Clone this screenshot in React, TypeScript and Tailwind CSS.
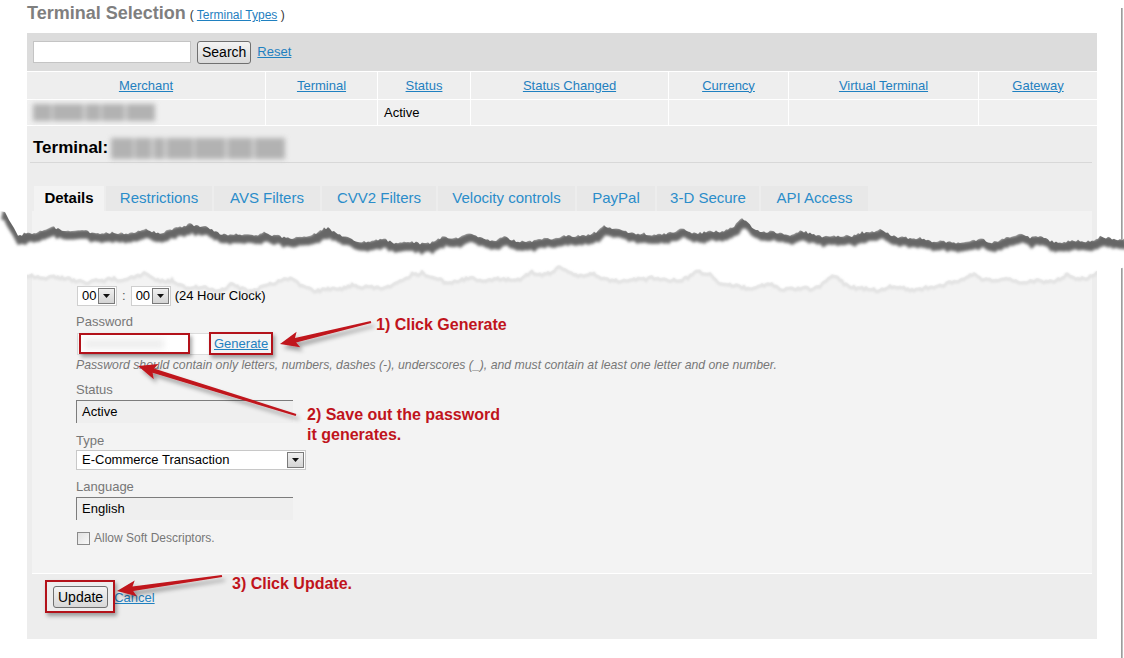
import React from "react";

const RED = "#c0141c";

const columns = ["Merchant", "Terminal", "Status", "Status Changed", "Currency", "Virtual Terminal", "Gateway"];

const tabs = [
  { label: "Details", w: "w-[70px]", active: true },
  { label: "Restrictions", w: "w-[106px]" },
  { label: "AVS Filters", w: "w-[106px]" },
  { label: "CVV2 Filters", w: "w-[114px]" },
  { label: "Velocity controls", w: "w-[137px]" },
  { label: "PayPal", w: "w-[78px]" },
  { label: "3-D Secure", w: "w-[102px]" },
  { label: "API Access", w: "w-[107px]" },
];

function Caret() {
  return (
    <svg width="7" height="4" viewBox="0 0 7 4">
      <path d="M0 0h7L3.5 4z" fill="#111" />
    </svg>
  );
}

function DropButton() {
  return (
    <span className="flex h-[16px] w-[17px] items-center justify-center border border-[#7a7a7a] bg-gradient-to-b from-[#f0f0f0] to-[#d4d4d4]">
      <Caret />
    </span>
  );
}

function TimeSelect() {
  return (
    <div className="flex h-[20px] w-[40px] items-center justify-between border border-[#cfcfcf] bg-white pl-[4px] pr-px">
      <span>00</span>
      <DropButton />
    </div>
  );
}

// obscured values: a strip of gray bars, blurred
function Smudge({ bars, className }: { bars: number[]; className: string }) {
  return (
    <div className={`flex overflow-hidden bg-[#c4c4c4] blur-[2.5px] ${className}`}>
      {bars.map((w, i) => (
        <span key={i} className={i % 2 ? "bg-[#d4d4d4]" : "bg-[#b2b2b2]"} style={{ width: w }} />
      ))}
    </div>
  );
}

function ReadOnlyBox({ value, w }: { value: string; w: string }) {
  return (
    <div className={`flex h-[23px] items-center border-l border-t border-[#7c7c7c] bg-[#efefef] pl-[5px] ${w}`}>
      {value}
    </div>
  );
}

// jagged paper edge with sharp upward points, seeded so it draws the same every time
function edge(seed: number, base: number, amp: number, from: number): [number, number][] {
  let s = seed * 7919;
  const rnd = () => {
    s = (s * 9301 + 49297) % 233280;
    return s / 233280;
  };
  const spike = (x: number, p: number, ph: number) => Math.pow(1 - Math.abs(Math.sin(x / p + ph)), 2.4);
  const pts: [number, number][] = [];
  for (let x = from; x <= 1124; x += 2) {
    const y =
      base +
      Math.sin(x / 90 + seed) * amp * 0.3 -
      spike(x, 44, seed * 1.7) * amp * 0.6 -
      spike(x, 19, seed * 0.6) * amp * 0.25 +
      Math.sin(x / 5.3 + seed) * amp * 0.05 +
      (rnd() - 0.5) * amp * 0.15;
    pts.push([x, y]);
  }
  return pts;
}

const toStr = (pts: [number, number][]) => pts.map(([x, y]) => `${x.toFixed(1)},${y.toFixed(1)}`).join(" ");

function Tear() {
  const top: [number, number][] = [[0, 211], [5, 212], [9, 220], [14, 228], ...edge(3, 238, 17, 18)];
  const bottom = edge(11, 283, 20, 0);
  const fill = [...top, ...[...bottom].reverse()];
  const shadow = top.map(([x, y]) => [x + 2, y + 4] as [number, number]);
  return (
    <svg className="pointer-events-none absolute left-0 top-0" width="1124" height="658" viewBox="0 0 1124 658">
      <defs>
        <clipPath id="under-edge">
          <polygon points={toStr([...top, [1124, 658], [0, 658]])} />
        </clipPath>
        <clipPath id="panel-span">
          <rect x="27" y="0" width="1070" height="658" />
        </clipPath>
        <filter id="soft" x="-5%" y="-50%" width="110%" height="200%">
          <feGaussianBlur stdDeviation="1.5" />
        </filter>
        <filter id="softer" x="-5%" y="-50%" width="110%" height="200%">
          <feGaussianBlur stdDeviation="1.2" />
        </filter>
      </defs>
      <polygon points={toStr(fill)} fill="#fff" />
      <g clipPath="url(#under-edge)">
        <polyline points={toStr(shadow)} fill="none" stroke="#666" strokeWidth="9" filter="url(#soft)" />
      </g>
      <g clipPath="url(#panel-span)">
        <polyline points={toStr(bottom.map(([x, y]) => [x, y + 2]))} fill="none" stroke="#e2e2e2" strokeWidth="3" filter="url(#softer)" />
      </g>
    </svg>
  );
}

function arrowPoints(x1: number, y1: number, x2: number, y2: number) {
  const dx = x2 - x1;
  const dy = y2 - y1;
  const len = Math.hypot(dx, dy);
  const ux = dx / len;
  const uy = dy / len;
  const nx = -uy;
  const ny = ux;
  const headLen = 19;
  const headW = 8;
  const bx = x2 - ux * headLen;
  const by = y2 - uy * headLen;
  const p = (x: number, y: number, w: number) => [x + nx * w, y + ny * w] as [number, number];
  return toStr([
    p(x1, y1, 1.1),
    p(bx + ux * 3, by + uy * 3, 2.2),
    p(bx, by, headW),
    [x2, y2],
    p(bx, by, -headW),
    p(bx + ux * 3, by + uy * 3, -2.2),
    p(x1, y1, -1.1),
  ]);
}

function Annotations() {
  return (
    <>
      <svg className="pointer-events-none absolute left-0 top-0" width="1124" height="658" viewBox="0 0 1124 658">
        <defs>
          <filter id="drop" x="-20%" y="-60%" width="140%" height="220%">
            <feDropShadow dx="3" dy="4" stdDeviation="2" floodColor="#000" floodOpacity="0.35" />
          </filter>
        </defs>
        <g fill={RED} filter="url(#drop)">
          <polygon points={arrowPoints(371, 322, 280, 344)} />
          <polygon points={arrowPoints(296, 415, 138, 366)} />
          <polygon points={arrowPoints(222, 576, 117, 591)} />
        </g>
      </svg>

      <div className="pointer-events-none absolute left-[79px] top-[333px] h-[21px] w-[111px] border-2 border-[#b3121a] shadow-[2px_3px_4px_rgba(0,0,0,0.35)]" />
      <div className="pointer-events-none absolute left-[209px] top-[332px] h-[23px] w-[64px] border-2 border-[#b3121a] shadow-[2px_3px_4px_rgba(0,0,0,0.35)]" />
      <div className="pointer-events-none absolute left-[45px] top-[580px] h-[33px] w-[70px] border-2 border-[#b3121a] shadow-[2px_3px_4px_rgba(0,0,0,0.35)]" />

      <div className="absolute left-[376px] top-[315px] text-[16px] font-bold leading-[20px] text-[#c0141c]">1) Click Generate</div>
      <div className="absolute left-[307px] top-[405px] text-[16px] font-bold leading-[20px] text-[#c0141c]">
        2) Save out the password
        <br />
        it generates.
      </div>
      <div className="absolute left-[232px] top-[574px] text-[16px] font-bold leading-[20px] text-[#c0141c]">3) Click Update.</div>
    </>
  );
}

export default function App() {
  return (
    <div className="relative h-[658px] w-[1124px] overflow-hidden bg-white font-['Liberation_Sans',Arial,sans-serif] text-[13px] text-black">
      <div className="flex h-full">
        <div className="w-[1121px]">
          {/* page heading */}
          <div className="flex h-[33px] items-baseline pl-[27px] pt-[2px]">
            <h1 className="text-[18px] font-bold leading-[22px] text-[#7f7f7f]">Terminal Selection</h1>
            <span className="ml-[4px] text-[12px] text-[#333]">
              ( <a className="cursor-pointer text-[#1f80c0] underline">Terminal Types</a> )
            </span>
          </div>

          <div className="ml-[27px] w-[1070px]">
            {/* search */}
            <div className="flex h-[38px] items-center bg-[#dcdcdc] pl-[6px]">
              <input className="h-[22px] w-[158px] border border-[#c4c4c4] bg-white outline-none" />
              <button className="ml-[6px] h-[23px] rounded-[3px] border border-[#707070] bg-gradient-to-b from-[#f4f4f4] to-[#dadada] px-[4px] text-[14px] leading-none">
                Search
              </button>
              <a className="ml-[6px] cursor-pointer text-[13px] text-[#1f80c0] underline">Reset</a>
            </div>

            {/* terminal list */}
            <div className="grid grid-cols-[238px_111px_92px_197px_119px_189px_118px] grid-rows-[27px_25px] gap-px bg-white py-px">
              {columns.map((c) => (
                <div key={c} className="flex items-center justify-center bg-[#eeeeee]">
                  <a className="cursor-pointer text-[#1f80c0] underline">{c}</a>
                </div>
              ))}
              <div className="flex items-center bg-[#f0f0f0] pl-[6px]">
                <Smudge bars={[18, 2, 30, 3, 14, 2, 22, 3, 28]} className="h-[17px] w-[122px]" />
              </div>
              <div className="bg-[#f0f0f0]" />
              <div className="flex items-center bg-[#f0f0f0] pl-[6px]">Active</div>
              <div className="bg-[#f0f0f0]" />
              <div className="bg-[#f0f0f0]" />
              <div className="bg-[#f0f0f0]" />
              <div className="bg-[#f0f0f0]" />
            </div>

            {/* terminal detail */}
            <section className="bg-[#ededed] pt-[12px]">
              <div className="flex h-[20px] items-center pl-[6px]">
                <span className="text-[17px] font-bold leading-[20px]">Terminal:</span>
                <Smudge bars={[22, 2, 16, 3, 10, 3, 26, 2, 30, 3, 24, 3, 30]} className="ml-[3px] h-[21px] w-[174px]" />
              </div>
              <div className="ml-[3px] mr-[5px] mt-[4px] h-px bg-[#d8d8d8]" />

              <div className="mt-[23px] flex h-[25px] gap-[2px] pl-[7px]">
                {tabs.map((t) => (
                  <div
                    key={t.label}
                    className={`flex items-center justify-center text-[15px] ${t.w} ${
                      t.active ? "bg-[#f3f3f3] font-bold text-black" : "bg-[#e8e8e8] text-[#2b8dca]"
                    }`}
                  >
                    {t.label}
                  </div>
                ))}
              </div>

              <div className="mx-[5px] border-b border-white bg-[#f3f3f3] pb-[27px] pl-[44px] pt-[18px]">
                <div className="leading-[15px] text-[#777]">Account</div>

                <div className="mt-[42px] flex h-[20px] items-center">
                  <div className="ml-px">
                    <TimeSelect />
                  </div>
                  <span className="mx-[5px] text-[#555]">:</span>
                  <TimeSelect />
                  <span className="ml-[4px]">(24 Hour Clock)</span>
                </div>

                <div className="mt-[8px] leading-[15px] text-[#777]">Password</div>
                <div className="mt-[4px] flex h-[22px] items-center">
                  <div className="ml-px flex h-[22px] w-[133px] items-center border border-[#dcdcdc] bg-white pl-[6px]">
                    <span className="h-[10px] w-[80px] bg-[#eeeeee] blur-[3px]" />
                  </div>
                  <a className="ml-[4px] cursor-pointer text-[#1f80c0] underline">Generate</a>
                </div>
                <div className="mt-[3px] text-[12.25px] italic leading-[14px] text-[#777]">
                  Password should contain only letters, numbers, dashes (-), underscores (_), and must contain at least one letter and one number.
                </div>

                <div className="mt-[10px] leading-[15px] text-[#777]">Status</div>
                <div className="mt-[3px]">
                  <ReadOnlyBox value="Active" w="w-[217px]" />
                </div>

                <div className="mt-[10px] leading-[15px] text-[#777]">Type</div>
                <div className="mt-[2px] flex h-[20px] w-[230px] items-center justify-between border border-[#c8c8c8] bg-white pl-[5px] pr-px">
                  <span>E-Commerce Transaction</span>
                  <DropButton />
                </div>

                <div className="mt-[9px] leading-[15px] text-[#777]">Language</div>
                <div className="mt-[3px]">
                  <ReadOnlyBox value="English" w="w-[217px]" />
                </div>

                <div className="mt-[10px] flex h-[16px] items-center text-[12px] text-[#777]">
                  <span className="ml-px h-[13px] w-[13px] border border-[#8a8a8a] bg-gradient-to-br from-[#e0e0e0] to-[#f8f8f8]" />
                  <span className="ml-[4px]">Allow Soft Descriptors.</span>
                </div>
              </div>

              <div className="flex h-[65px] items-start pl-[26px] pt-[12px]">
                <button className="h-[22px] rounded-[3px] border border-[#707070] bg-gradient-to-b from-[#f4f4f4] to-[#d8d8d8] px-[4px] text-[14px] leading-none">
                  Update
                </button>
                <a className="ml-[6px] mt-[2px] cursor-pointer text-[#1f80c0] underline">Cancel</a>
              </div>
            </section>
          </div>
        </div>
        <div className="mt-[8px] w-[2px] bg-gradient-to-r from-[#8c8c8c] to-[#cfcfcf]" />
      </div>

      <Tear />
      <Annotations />
    </div>
  );
}
